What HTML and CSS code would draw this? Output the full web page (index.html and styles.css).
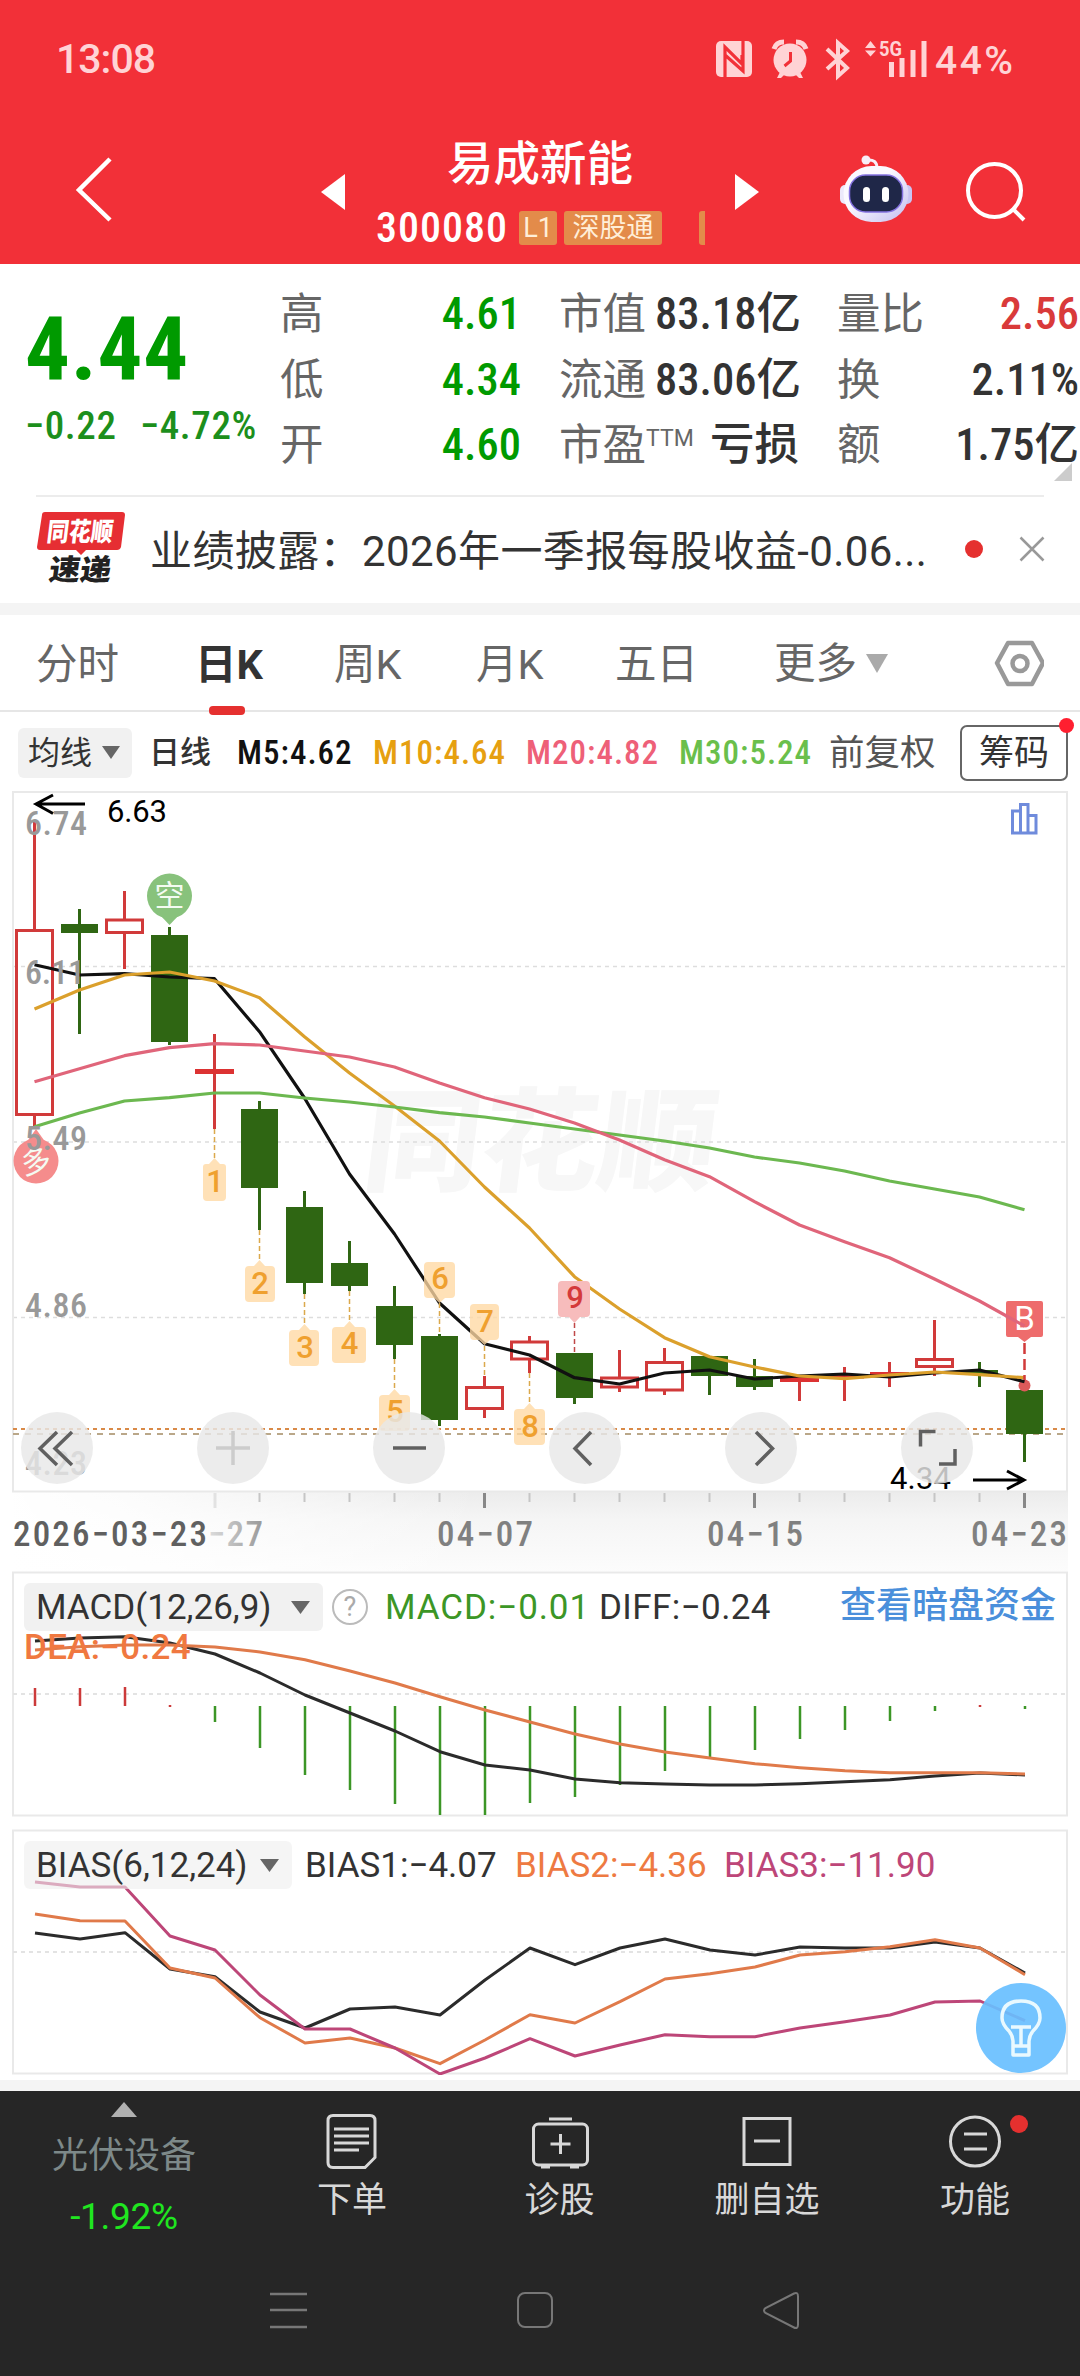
FILE: index.html
```html
<!DOCTYPE html>
<html lang="zh-CN">
<head>
<meta charset="utf-8">
<title>易成新能 300080</title>
<link rel="stylesheet" href="styles.css">
</head>
<body>
<header class="top">
  <div class="status">
    <span class="clock">13:08</span>
    <svg class="status-icons" width="220" height="44" viewBox="712 37 220 44">
      <rect x="716" y="41" width="36" height="36" rx="5" fill="#ffd3d5"/>
      <path d="M725.500 77V47l17 17V55M743.500 41v30l-18-16" fill="none" stroke="#f23038" stroke-width="3.200" transform="translate(-.5 0)"/>
      <g fill="#ffd3d5"><circle cx="790" cy="60" r="16.500"/><path d="M780 72l-3 6h4l4-4zM800 72l3 6h-4l-4-4z"/></g>
      <path d="M774 49q2-7 10-7M806 49q-2-7-10-7" fill="none" stroke="#ffd3d5" stroke-width="5"/>
      <path d="M790.500 52v9l-6 5" fill="none" stroke="#f23038" stroke-width="3"/>
      <path d="M827 49l20 19-9 8V43l9 8-20 18" fill="none" stroke="#ffd3d5" stroke-width="4"/>
      <path d="M865 48l5.500-7 5.500 7zM865 50.500l5.500 6 5.500-6z" fill="#ffd3d5"/>
      <text x="879" y="56" class="fiveg" textLength="23" lengthAdjust="spacingAndGlyphs">5G</text>
      <path d="M891.500 62v15M902 58v19M913 50v27M924 41v36" stroke="#ffd3d5" stroke-width="5"/>
    </svg>
    <span class="battery">44%</span>
  </div>
  <div class="titlebar">
    <svg class="back" width="48" height="74" viewBox="70 153 48 74"><path d="M110 159L79 190l31 30" fill="none" stroke="#fff" stroke-width="4.500"/></svg>
    <svg class="step" width="26" height="38" viewBox="320 173 26 38"><path d="M345 174v36l-24-18z" fill="#fff"/></svg>
    <div class="stock">
      <h1>易成新能</h1>
      <div class="code"><span class="code-no">300080</span><span class="tag l1">L1</span><span class="tag sgt">深股通</span><span class="tag sliver"></span></div>
    </div>
    <svg class="step" width="26" height="38" viewBox="734 173 26 38"><path d="M735 174v36l24-18z" fill="#fff"/></svg>
    <svg class="robot" width="76" height="74" viewBox="838 153 76 74">
      <defs><linearGradient id="head" x1="0" y1="0" x2="1" y2="1"><stop offset=".4" stop-color="#fbf9ff"/><stop offset="1" stop-color="#c3bdf0"/></linearGradient></defs>
      <circle cx="866" cy="160" r="4.500" fill="#f8eef8"/><path d="M867 160q10-1 10 8" fill="none" stroke="#f8eef8" stroke-width="3"/>
      <rect x="840" y="185" width="12" height="19" rx="5" fill="#ece9fb"/><rect x="900" y="185" width="12" height="19" rx="5" fill="#c9c5f3"/>
      <rect x="843.500" y="166" width="65" height="56" rx="28" fill="url(#head)"/>
      <rect x="849.500" y="175" width="53" height="37" rx="16" fill="#1f2748" stroke="#8472e0" stroke-width="1.500"/>
      <rect x="863" y="187" width="7" height="15" rx="3.500" fill="#fff"/><rect x="882" y="187" width="7" height="15" rx="3.500" fill="#fff"/>
    </svg>
    <svg class="search" width="64" height="64" viewBox="963 159 64 64"><g fill="none" stroke="#fff" stroke-width="4"><circle cx="994.500" cy="190.500" r="26.500"/><path d="M1013 209l11 11"/></g></svg>
  </div>
</header>

<section class="quote">
  <div class="price">
    <div class="last">4.44</div>
    <div class="change"><span>−0.22</span><span>−4.72%</span></div>
  </div>
  <div class="stats">
    <span>高</span><b class="down">4.61</b><span>市值</span><b>83.18亿</b><span>量比</span><b class="up">2.56</b>
    <span>低</span><b class="down">4.34</b><span>流通</span><b>83.06亿</b><span>换</span><b class="pct">2.11%</b>
    <span>开</span><b class="down">4.60</b><span>市盈<sup>TTM</sup></span><b>亏损</b><span>额</span><b>1.75亿</b>
  </div>
  <svg class="corner" width="18" height="18" viewBox="0 0 18 18"><path d="M18 0v18H0z" fill="#ccc"/></svg>
</section>

<section class="news">
  <svg class="logo" width="90" height="78" viewBox="37 511 90 78">
    <path d="M45 513h77q3 0 3 3l-4 32q-1 3-4 3H86l-5 5-5-5H40q-3 0-3-3l5-32q0-3 3-3z" fill="#e62e33"/>
    <text x="0" y="0" transform="translate(46 542) skewX(-7)" class="logo-a" textLength="66" lengthAdjust="spacingAndGlyphs">同花顺</text>
    <text x="0" y="0" transform="translate(48 581) skewX(-8)" class="logo-b" textLength="62" lengthAdjust="spacingAndGlyphs">速递</text>
  </svg>
  <p>业绩披露：2026年一季报每股收益-0.06...</p>
  <i class="dot"></i>
  <svg class="close" width="26" height="26" viewBox="0 0 26 26"><path d="M1.500 1.500l23 23M24.500 1.500l-23 23" stroke="#999" stroke-width="2.500"/></svg>
</section>

<nav class="tabs">
  <span>分时</span><span class="on">日K</span><span>周K</span><span>月K</span><span>五日</span>
  <span class="more">更多<svg width="22" height="19" viewBox="0 0 22 19"><path d="M0 0h22L11 19z" fill="#aaa"/></svg></span>
  <svg class="gear" width="50" height="50" viewBox="994 638 50 50"><g fill="none" stroke="#999" stroke-width="4.500"><path d="M1008 643h24l11 20-11 21h-24l-11-21z" stroke-linejoin="round"/><circle cx="1020" cy="663.500" r="7.500"/></g></svg>
</nav>

<section class="legend">
  <span class="chip">均线<svg width="18" height="13" viewBox="0 0 18 13"><path d="M0 0h18L9 13z" fill="#666"/></svg></span>
  <span class="period">日线</span><b class="m5">M5:4.62</b><b class="m10">M10:4.64</b><b class="m20">M20:4.82</b><b class="m30">M30:5.24</b><span class="adj">前复权</span>
  <span class="chips-btn">筹码<i></i></span>
</section>

<section class="kline">
<svg width="1080" height="780" viewBox="0 791 1080 780">
  <defs>
    <linearGradient id="axisbg" x1="0" y1="0" x2="0" y2="1"><stop offset="0" stop-color="#ececec"/><stop offset=".35" stop-color="#f5f5f5"/><stop offset="1" stop-color="#fcfcfc"/></linearGradient>
    <linearGradient id="fade"><stop offset="0" stop-color="#fff"/><stop offset=".25" stop-color="#fff" stop-opacity=".85"/><stop offset="1" stop-color="#fff" stop-opacity="0"/></linearGradient>
    <linearGradient id="old"><stop offset="0" stop-color="#ddd"/><stop offset="1" stop-color="#999"/></linearGradient>
  </defs>
  <rect x="13" y="1492" width="1055" height="80" fill="url(#axisbg)"/>
  <rect x="0" y="1492" width="480" height="80" fill="url(#fade)"/>
  <text class="mark" transform="translate(360 1182) skewX(-7)" textLength="352" lengthAdjust="spacingAndGlyphs">同花顺</text>
  <g stroke="#ddd" stroke-width="1.500" stroke-dasharray="4 4"><path d="M13 966.500H1066M13 1142H1066M13 1317.500H1066"/></g>
  <rect x="13" y="792" width="1054" height="699.500" fill="none" stroke="#e9e9e9" stroke-width="2"/>
  <path d="M13 1429H1066" stroke="#d98a48" stroke-width="2" stroke-dasharray="4 4"/>
  <path d="M13 1434H1066" stroke="#baa789" stroke-width="2" stroke-dasharray="6 6"/>

  <g class="pin"><path d="M159 914h21l-10.500 11z" fill="#88c27c"/><circle cx="169.500" cy="896" r="22.500" fill="#88c27c"/><text x="169.500" y="906" textLength="30" lengthAdjust="spacingAndGlyphs">空</text></g>
  <g class="pin"><path d="M26 1143h20l-10-14z" fill="#f58c8c"/><circle cx="36" cy="1161" r="22.500" fill="#f58c8c"/><text x="36" y="1172" transform="rotate(-12 36 1161)">多</text></g>

  <g stroke="#d13a3a" stroke-width="3" fill="none">
    <path d="M34.500 822V930M34.500 1115V1127M124.500 891V919M124.500 934V969M214.500 1034V1129M484.500 1376V1387M484.500 1409V1418M529.500 1336V1342M529.500 1359V1373M619.500 1350V1377M619.500 1388V1392M664.500 1348V1362M664.500 1391V1395M799.500 1380V1401M844.500 1367V1401M889.500 1362V1387M934.500 1320V1359M934.500 1368V1376"/>
    <rect x="16.500" y="930.500" width="36" height="184"/><rect x="106.500" y="920" width="36" height="12.500"/>
    <rect x="466.500" y="1387.500" width="36" height="21"/><rect x="511.500" y="1342" width="36" height="17"/>
    <rect x="601.500" y="1378" width="36" height="9"/><rect x="646.500" y="1362.500" width="36" height="27.500"/>
    <rect x="916.500" y="1359.500" width="36" height="7"/>
  </g>
  <path d="M195 1069h39v5h-39zM780 1377h39v5h-39zM825 1375h39v3.500h-39zM870 1372h39v3.500h-39z" fill="#dc3232"/>
  <path d="M79.500 909V1034M169.500 927V1045M259.500 1101V1230M304.500 1191V1294M349.500 1241V1291M394.500 1286V1359M439.500 1334V1426M574.500 1353V1404M709.500 1356V1395M754.500 1359V1390M979.500 1362V1387M1024.500 1386V1462" stroke="#2f6613" stroke-width="3"/>
  <path d="M61 924h37v9H61zM151 935h37v107h-37zM241 1109h37v79h-37zM286 1207h37v76h-37zM331 1263h37v23h-37zM376 1306h37v39h-37zM421 1336h37v84h-37zM556 1353h37v45h-37zM691 1356h37v20h-37zM736 1376h37v11h-37zM961 1370h37v4h-37zM1006 1390h37v44h-37z" fill="#2f6613"/>
  <circle cx="1024.500" cy="1385.500" r="6" fill="#dc5a5a"/>

  <g fill="none" stroke-width="3.200" stroke-linejoin="round">
    <polyline stroke="#111" points="34.500,964.700 79.500,975 124.500,973.700 169.500,977 214.500,978.700 259.500,1031.700 304.500,1098 349.500,1174 394.500,1234 439.500,1303 484.500,1343.700 529.500,1355 574.500,1377.700 619.500,1384 664.500,1373 709.500,1370 754.500,1379 799.500,1376 844.500,1374 889.500,1377 934.500,1373 979.500,1370 1024.500,1381.700"/>
    <polyline stroke="#dba02c" points="34.500,1009 79.500,990 124.500,975 169.500,972 214.500,981 259.500,997.700 304.500,1036.700 349.500,1073 394.500,1106 439.500,1141 484.500,1187 529.500,1228 574.500,1276.700 619.500,1309 664.500,1337.700 709.500,1356.700 754.500,1367 799.500,1376 844.500,1378.700 889.500,1375 934.500,1372 979.500,1374.700 1024.500,1377.700"/>
    <polyline stroke="#6cb850" points="34.500,1126.700 79.500,1113 124.500,1101 169.500,1097.700 214.500,1093 259.500,1093 304.500,1098 349.500,1102 394.500,1107 439.500,1112.700 484.500,1117 529.500,1123 574.500,1129 619.500,1135 664.500,1141 709.500,1148 754.500,1157 799.500,1163 844.500,1171 889.500,1181 934.500,1189 979.500,1197 1024.500,1209.700"/>
  </g>

  <g stroke="#dba94c" stroke-width="1.500" stroke-dasharray="5 3"><path d="M214.500 1129V1158M259.500 1230V1260M304.500 1294V1324M349.500 1291V1321M394.500 1359V1389M439.500 1303V1334M484.500 1346V1376M529.500 1373V1403"/></g>
  <path d="M574.500 1323V1353" stroke="#c04848" stroke-width="1.500" stroke-dasharray="5 3"/>
  <path d="M1024.500 1343V1380" stroke="#d13a3a" stroke-width="2.500" stroke-dasharray="11 5"/>
  <g fill="#ffd9a3" fill-opacity=".78">
    <path d="M206 1164h3l5.500-6 5.500 6h3q3 0 3 3v30q0 4-4 4h-15q-4 0-4-4v-30q0-3 3-3z"/>
    <path d="M249 1266h5l5.500-6 5.500 6h6q4 0 4 4v28q0 4-4 4h-22q-4 0-4-4v-28q0-4 4-4z"/>
    <path d="M293 1330h6l5.500-6 5.500 6h5q4 0 4 4v28q0 4-4 4h-22q-4 0-4-4v-28q0-4 4-4z"/>
    <path d="M336 1327h8l5.500-6 5.500 6h7q4 0 4 4v28q0 4-4 4h-26q-4 0-4-4v-28q0-4 4-4z"/>
    <path d="M383 1395h6l5.500-6 5.500 6h6q4 0 4 4v28q0 4-4 4h-23q-4 0-4-4v-28q0-4 4-4z"/>
    <path d="M518 1409h6l5.500-6 5.500 6h6q4 0 4 4v28q0 4-4 4h-23q-4 0-4-4v-28q0-4 4-4z"/>
    <path d="M428 1262h23q4 0 4 4v28q0 4-4 4h-6l-5.500 5-5.500-5h-6q-4 0-4-4v-28q0-4 4-4z"/>
    <path d="M474 1304h21q4 0 4 4v28q0 4-4 4h-5l-5.500 5-5.500-5h-5q-4 0-4-4v-28q0-4 4-4z"/>
  </g>
  <path d="M562 1281h24q4 0 4 4v28q0 4-4 4h-6l-5.500 6-5.500-6h-7q-4 0-4-4v-28q0-4 4-4z" fill="#f7bcbc"/>
  <path d="M1008 1301h33q2 0 2 2v32q0 2-2 2h-10l-6.500 5-6.500-5h-10q-2 0-2-2v-32q0-2 2-2z" fill="#ee6c6c"/>
  <g class="nums"><text x="215" y="1192">1</text><text x="260" y="1294">2</text><text x="305" y="1358">3</text><text x="349.500" y="1354">4</text><text x="395" y="1422">5</text><text x="440" y="1289">6</text><text x="485" y="1332">7</text><text x="530" y="1437">8</text><text x="575" y="1308" fill="#d43a3a">9</text></g>
  <text x="1024.500" y="1330" class="buy">B</text>
  <polyline fill="none" stroke="#e0657a" stroke-width="3.200" stroke-linejoin="round" points="34.500,1081.700 79.500,1068.700 124.500,1055.700 169.500,1047.700 214.500,1043.700 259.500,1045 304.500,1051 349.500,1057 394.500,1067 439.500,1083 484.500,1097.700 529.500,1109 574.500,1123 619.500,1140 664.500,1159.700 709.500,1176.700 754.500,1201.700 799.500,1225 844.500,1241.700 889.500,1257.700 934.500,1279 979.500,1301 1024.500,1326"/>

  <g class="scale"><text x="25" y="834.500" textLength="62">6.74</text><text x="25" y="984" textLength="60">6.11</text><text x="25" y="1150" textLength="62">5.49</text><text x="25" y="1317" textLength="62">4.86</text><text x="25" y="1475" textLength="62">4.23</text></g>
  <g class="ext"><text x="107" y="822" textLength="60">6.63</text><text x="890" y="1489" textLength="61">4.34</text></g>
  <path d="M85 804H36M53 795L36 804l17 9.500M973 1480h51M1007 1471l17 9-17 9" fill="none" stroke="#000" stroke-width="3"/>
  <path d="M1012.500 811h8v22h-8zM1020.500 804.500h7.500v28.500h-7.500zM1028 815.500h8v17.500h-8z" fill="none" stroke="#6f8bdc" stroke-width="3"/>

  <g fill="#e8e8e8" fill-opacity=".82"><circle cx="57" cy="1448" r="36"/><circle cx="233" cy="1448" r="36"/><circle cx="409" cy="1448" r="36"/><circle cx="585" cy="1448" r="36"/><circle cx="761" cy="1448" r="36"/><circle cx="937" cy="1448" r="36"/></g>
  <path d="M233 1431v34M216 1448h34" stroke="#ccc" stroke-width="3.500"/>
  <path d="M57 1432L40 1448.500l17 16.500M72 1432l-17 16.500 17 16.500M393 1448h33M591 1432l-16 16.500 16 16.500M756 1432l16.500 16.500-16.500 16.500M935.500 1431.500h-15v15M955 1449v15h-16" fill="none" stroke="#606060" stroke-width="3.500"/>

  <path d="M259.500 1493v9M304.500 1493v9M349.500 1493v9M394.500 1493v9M439.500 1493v9M529.500 1493v9M574.500 1493v9M619.500 1493v9M664.500 1493v9M709.500 1493v9M799.500 1493v9M844.500 1493v9M889.500 1493v9M934.500 1493v9M979.500 1493v9" stroke="#c6c6c6" stroke-width="2"/>
  <path d="M484.500 1493v15M754.500 1493v15M1024.500 1493v15" stroke="#888" stroke-width="3"/>
  <path d="M215 1493v15" stroke="#e2e2e2" stroke-width="3"/>
  <g class="dates"><text x="13" y="1546" textLength="194" fill="#606060">2026−03−23</text><text x="208" y="1546" textLength="55" style="fill:url(#old)">−27</text><text x="437" y="1546" textLength="96">04−07</text><text x="707" y="1546" textLength="96">04−15</text><text x="971" y="1546" textLength="96">04−23</text></g>
</svg>
</section>

<section class="panel macd">
  <svg class="plot" width="1080" height="246" viewBox="0 1571 1080 246">
    <rect x="13" y="1572.500" width="1054" height="243" fill="none" stroke="#e9e9e9" stroke-width="2"/>
    <path d="M13 1694H1066" stroke="#e3e3e3" stroke-width="2" stroke-dasharray="4 4"/>
    <path d="M35 1688v18M80 1688v18M125 1687v19M170 1705v2M980 1705v2" stroke="#cc3a3a" stroke-width="2.500"/>
    <path d="M215 1706v16M260 1706v42M305 1706v69M350 1706v84M395 1706v98M440 1706v109M485 1706v109M530 1706v97M575 1706v91M620 1706v79M665 1706v65M710 1706v51M755 1706v44M800 1706v33M845 1706v24M890 1706v15M935 1706v5M1025 1706v3" stroke="#3c9626" stroke-width="2.500"/>
    <g fill="none" stroke-width="3" stroke-linejoin="round">
      <polyline stroke="#2b2b2b" points="35,1641 80,1638 125,1636.700 170,1643 215,1654 260,1673 305,1695 350,1713 395,1731 440,1751.700 485,1765 530,1770 575,1779 620,1782.700 665,1784 710,1785 755,1785 800,1783.700 845,1781.700 890,1779.700 935,1776 980,1773 1025,1775"/>
      <polyline stroke="#e07a4a" points="35,1650 80,1646.700 125,1645 170,1645 215,1647 260,1652 305,1659.700 350,1671 395,1683 440,1696.700 485,1710 530,1722 575,1734 620,1744 665,1752 710,1758 755,1763.700 800,1767.700 845,1770.700 890,1772.700 935,1772.700 980,1772.700 1025,1774"/>
    </g>
  </svg>
  <div class="ind">
    <span class="chip2 c1"><span>MACD(12,26,9)</span><svg width="19" height="13" viewBox="0 0 19 13"><path d="M0 0h19L9.500 13z" fill="#666"/></svg></span>
    <span class="help">?</span>
    <span class="v-macd">MACD:−0.01</span><span class="v-diff">DIFF:−0.24</span>
    <a>查看暗盘资金</a>
  </div>
  <div class="v-dea">DEA:−0.24</div>
</section>

<section class="panel bias">
  <svg class="plot" width="1080" height="246" viewBox="0 1829 1080 246">
    <rect x="13" y="1830.500" width="1054" height="243" fill="none" stroke="#e9e9e9" stroke-width="2"/>
    <path d="M13 1952H1066" stroke="#e3e3e3" stroke-width="2" stroke-dasharray="4 4"/>
    <g fill="none" stroke-width="3" stroke-linejoin="round">
      <polyline stroke="#2b2b2b" points="35,1933 80,1939 125,1932.700 170,1969 215,1976.700 260,2012 305,2028 350,2009 395,2007 440,2015 485,1980 530,1948 575,1964.700 620,1948 665,1939 710,1950 755,1955 800,1947 845,1948 890,1948 935,1942 980,1948 1025,1973"/>
      <polyline stroke="#e07a4a" points="35,1914 80,1920.700 125,1921 170,1968 215,1978 260,2017.700 305,2043 350,2038 395,2048 440,2063.700 485,2040 530,2014.700 575,2023 620,2001.700 665,1979 710,1973.700 755,1967 800,1955 845,1951.700 890,1946.700 935,1939.700 980,1948 1025,1974.700"/>
      <polyline stroke="#bd4678" points="35,1882 80,1887 125,1887 170,1936 215,1950 260,1995 305,2029 350,2029 395,2048 440,2074 485,2058 530,2038.700 575,2056 620,2045 665,2034.700 710,2036.700 755,2036.700 800,2028 845,2021.700 890,2015 935,2002 980,2001 1025,2020.700"/>
    </g>
  </svg>
  <div class="ind">
    <span class="chip2 c2"><span>BIAS(6,12,24)</span><svg width="19" height="13" viewBox="0 0 19 13"><path d="M0 0h19L9.500 13z" fill="#666"/></svg></span>
    <span class="b1">BIAS1:−4.07</span><span class="b2">BIAS2:−4.36</span><span class="b3">BIAS3:−11.90</span>
  </div>
  <svg class="bulb" width="92" height="92" viewBox="975 1982 92 92">
    <circle cx="1021" cy="2028" r="45" fill="#68bfff" fill-opacity=".92"/>
    <path d="M1013 2046v-5q0-5-4-10-7-7-7-13 0-17 19-17t19 17q0 6-7 13-4 5-4 10v5M1011 2027h20M1021 2027v20M1013 2046h16v9h-16z" fill="none" stroke="#e9f9ff" stroke-width="3.500" stroke-linejoin="round"/>
  </svg>
</section>

<footer>
  <div class="actions">
    <div class="sector"><svg width="26" height="15" viewBox="0 0 26 15"><path d="M13 0l13 15H0z" fill="#b0b0b0"/></svg><span>光伏设备</span><em>-1.92%</em></div>
    <div class="act"><svg width="60" height="60" viewBox="323 2111 60 60"><g fill="none" stroke="#d8d8d8" stroke-width="3"><path d="M334 2115.500h37q5 0 5 5v37l-10 10h-32q-5 0-5-5v-42q0-5 5-5z"/><path d="M335 2129h35M335 2136h35M335 2143h35M335 2150h25"/></g></svg><span>下单</span></div>
    <div class="act"><svg width="60" height="60" viewBox="529 2111 60 60"><g fill="none" stroke="#d8d8d8" stroke-width="3"><rect x="532.500" y="2124" width="54" height="41" rx="5"/><path d="M548 2119h23M559.500 2134v20M549.500 2144h20M540 2167h9M569 2167h9"/></g></svg><span>诊股</span></div>
    <div class="act"><svg width="60" height="60" viewBox="737 2111 60 60"><g fill="none" stroke="#d8d8d8" stroke-width="3"><rect x="744" y="2118.500" width="46" height="46"/><path d="M754 2141h26"/></g></svg><span>删自选</span></div>
    <div class="act"><svg width="60" height="60" viewBox="945 2111 60 60"><g fill="none" stroke="#d8d8d8" stroke-width="3"><circle cx="975" cy="2141.500" r="24.500"/><path d="M964 2134h23M964 2149h23"/></g></svg><span>功能</span><i class="dot"></i></div>
  </div>
  <div class="sysnav">
    <svg width="38" height="38" viewBox="0 0 38 38"><path d="M0 3h37M0 19h37M0 36h37" stroke="#777" stroke-width="2.500"/></svg>
    <svg width="38" height="38" viewBox="0 0 38 38"><rect x="2" y="2" width="34" height="34" rx="7" fill="none" stroke="#777" stroke-width="2"/></svg>
    <svg width="38" height="38" viewBox="0 0 38 38"><path d="M32 2.500q4-2 4 3v28q0 5-4 3L3.500 22q-3-2.500 0-5z" fill="none" stroke="#777" stroke-width="2"/></svg>
  </div>
</footer>
</body>
</html>
```
FILE: styles.css
```css
* { box-sizing: border-box; margin: 0; padding: 0; }
body { width: 1080px; height: 2376px; overflow: hidden; background: #fff; color: #333; font-family: Roboto, "Noto Sans CJK SC", sans-serif; display: flex; flex-direction: column; }
svg { display: block; flex: none; }
i, em { font-style: normal; }
span, b, a, p { white-space: nowrap; }

.top { height: 264px; background: #f23038; color: #fff; }
.status { height: 118px; padding: 37px 0 0 56px; display: flex; color: #ffd3d5; font-weight: 500; }
.clock { width: 656px; font-size: 41px; line-height: 45px; letter-spacing: -1px; }
.battery { font-size: 39px; line-height: 48px; margin-left: 3px; letter-spacing: 2.500px; }
.fiveg { font: 700 21px Roboto, sans-serif; fill: #ffd3d5; }
.titlebar { display: grid; grid-template-columns: 250px 26px 388px 104px 125px 64px; align-items: start; padding-left: 70px; height: 146px; }
.back, .robot { margin-top: 35px; }
.step { margin-top: 55px; }
.search { margin-top: 41px; }
.stock h1 { font-size: 46.500px; line-height: 60px; font-weight: 500; margin-top: 16px; padding-left: 101px; }
.code { display: flex; align-items: center; padding-left: 30px; height: 38px; margin-top: 15px; }
.code-no { font-size: 42px; font-weight: 500; font-stretch: 75%; width: 143px; letter-spacing: 1px; line-height: 38px; }
.tag { height: 34px; line-height: 34px; background: #e38b4a; color: #ffeed8; text-align: center; border-radius: 3px; font-size: 27px; }
.l1 { width: 38px; }
.sgt { width: 98px; margin-left: 7px; }
.sliver { width: 6px; margin-left: 37px; border-radius: 3px 0 0 3px; }

.quote { height: 231px; display: flex; position: relative; }
.price { width: 280px; padding-left: 25px; color: #009a00; font-weight: 500; }
.last { font-size: 89px; line-height: 90px; margin-top: 41px; font-stretch: 75%; letter-spacing: .8px; font-weight: 700; }
.change { display: flex; font-size: 39px; line-height: 44px; margin-top: 9px; color: #1c8f1c; font-stretch: 75%; letter-spacing: .6px; }
.change span:first-child { width: 115px; }
.stats { display: grid; grid-template-columns: 80px 161px 134px 144px 134px 146px; grid-template-rows: repeat(3, 65.500px); padding-top: 18px; height: 214px; line-height: 65.500px; align-content: start; }
.stats span { font-size: 43.500px; color: #666; }
.stats span:nth-child(6n+3), .stats span:nth-child(6n+5) { padding-left: 38px; }
.stats b { font-size: 44.500px; font-weight: 500; text-align: right; font-stretch: 75%; letter-spacing: 0; color: #333; }
.stats b.down { color: #009a00; }
.stats b.up { color: #d93a3a; }
.stats sup { font-size: 23px; line-height: 10px; vertical-align: 14px; }
.corner { position: absolute; right: 8px; top: 199px; }

.news { height: 120px; border-bottom: 12px solid #f4f4f4; display: flex; align-items: center; padding-left: 37px; background: linear-gradient(#ececec, #ececec) 36px 0 / 1008px 2px no-repeat; }
.news p { width: 815px; margin: 5px 0 0 23px; font-size: 42px; line-height: 60px; letter-spacing: .4px; color: #333; }
.dot { width: 18px; height: 18px; border-radius: 50%; background: #e5302f; }
.close { margin-left: 36px; }
.logo { overflow: visible; }
.logo-a { font: 900 26px "Noto Sans CJK SC", sans-serif; fill: #fff; }
.logo-b { font: 900 29px "Noto Sans CJK SC", sans-serif; fill: #222; }

.tabs { height: 97px; border-bottom: 2px solid #e6e6e6; display: grid; grid-template-columns: 159px 139px 142px 139px 159px 220px 60px; padding-left: 36px; font-size: 41.500px; line-height: 100px; color: #666; }
.on { font-weight: 700; color: #333; position: relative; }
.on::after { content: ""; position: absolute; left: 14px; bottom: 0; width: 36px; height: 9px; border-radius: 4px; background: #e5302f; }
.more { display: flex; align-items: center; gap: 9px; height: 97px; }
.gear { margin-top: 23px; }

.legend { height: 79px; display: grid; grid-template-columns: 131px 88px 136px 153px 153px 150px 131px 108px; align-items: center; padding: 2px 0 0 18px; line-height: 54px; }
.legend b { font-weight: 500; font-size: 33px; font-stretch: 75%; letter-spacing: 1px; }
.chip { width: 114px; height: 50px; border-radius: 6px; background: #f1f1f1; font-size: 32px; line-height: 50px; display: flex; align-items: center; padding-left: 10px; gap: 10px; }
.period { font-size: 31px; font-weight: 500; }
.m5 { color: #111; } .m10 { color: #e6a010; } .m20 { color: #ee6078; } .m30 { color: #6abf4b; }
.adj { font-size: 35.500px; color: #555; }
.chips-btn { height: 56px; border: 2px solid #666; border-radius: 7px; font-size: 35px; line-height: 54px; text-align: center; position: relative; }
.chips-btn i { position: absolute; width: 15px; height: 15px; border-radius: 50%; background: #ff1f30; right: -8px; top: -9px; }

.kline { height: 780px; }
.kline text { font-family: Roboto, "Noto Sans CJK SC", sans-serif; }
.mark { font-size: 112px; font-weight: 900; fill: #f7f7f7; }
.pin text { font-size: 30px; fill: #f4fbf2; text-anchor: middle; }
.nums { font-size: 31px; font-weight: 500; fill: #efa02f; text-anchor: middle; }
.buy { font-size: 33px; fill: #fff; text-anchor: middle; }
.scale { font-size: 34px; fill: #999; font-weight: 500; font-stretch: 75%; }
.ext { font-size: 31px; fill: #000; }
.dates { font-size: 35px; fill: #808080; font-weight: 500; font-stretch: 75%; }

.panel { position: relative; height: 246px; }
.plot { position: absolute; left: 0; top: 0; }
.ind { position: relative; display: flex; align-items: center; height: 48px; margin-top: 12px; padding-left: 24px; font-size: 35px; }
.chip2 { height: 48px; border-radius: 6px; background: rgba(240, 240, 240, .9); display: flex; align-items: center; justify-content: space-between; padding: 0 13px 0 12px; }
.bias .chip2 { background: rgba(238, 238, 238, .6); }
.c1 { width: 299px; } .c2 { width: 268px; }
.help { width: 36px; height: 36px; border: 2.500px solid #bbb; border-radius: 50%; margin-left: 9px; text-align: center; font-size: 27px; line-height: 32px; color: #aaa; }
.v-macd { color: #3c9626; width: 214px; margin-left: 17px; letter-spacing: .9px; }
.v-diff { width: 241px; letter-spacing: .4px; }
.ind a { font-size: 36px; color: #4a8fdb; font-weight: 500; line-height: 44px; margin-top: -3px; }
.v-dea { position: relative; padding-left: 24px; margin-top: -4px; line-height: 42px; font-size: 35px; color: #f07840; letter-spacing: .3px; font-weight: 500; }
.macd { margin-bottom: 12px; }
.b1 { width: 210px; margin-left: 13px; }
.b2 { width: 209px; color: #ee7a42; }
.b3 { color: #bd4678; }
.bulb { position: absolute; left: 975px; top: 153px; }
.bias { height: 251px; }

footer { flex: 1; background: #262626; border-top: 11px solid #f4f4f4; color: #d8d8d8; }
.actions { display: grid; grid-template-columns: 248px 208px 207px 208px 208px; height: 160px; font-size: 35px; }
.sector { display: flex; flex-direction: column; align-items: center; padding-top: 11px; color: #7d8989; }
.sector span { font-size: 36px; line-height: 52px; margin-top: 13px; }
.sector em { font-size: 37px; line-height: 50px; margin-top: 10px; color: #20e620; letter-spacing: -.3px; }
.act { display: flex; flex-direction: column; align-items: center; padding-top: 20px; position: relative; }
.act span { line-height: 50px; margin-top: 5px; }
.act .dot { position: absolute; right: 51px; top: 24px; }
.sysnav { display: flex; padding: 40px 0 0 270px; gap: 208px; }
```
